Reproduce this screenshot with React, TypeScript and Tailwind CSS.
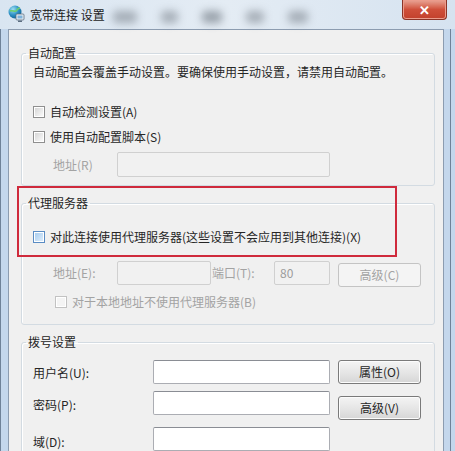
import type { ReactNode } from "react";

const cjk = "font-['Noto_Sans_CJK_SC','Noto_Sans',sans-serif]";

function CheckBox({ hot = false, disabled = false }: { hot?: boolean; disabled?: boolean }) {
  return (
    <span
      className={`flex h-[12px] w-[12px] shrink-0 items-center justify-center border ${
        hot ? "border-[#5a8cc4]" : disabled ? "border-[#c2c2c2]" : "border-[#8f8f8f]"
      } bg-white`}
    >
      <span
        className={`h-[8px] w-[8px] ${
          hot
            ? "bg-gradient-to-br from-[#a8cdef] to-[#dcecfb]"
            : disabled
            ? "bg-[#f4f4f4]"
            : "bg-gradient-to-br from-[#d6d6d6] to-[#fafafa]"
        }`}
      />
    </span>
  );
}

function CheckRow({
  label,
  hot,
  disabled,
  className = "",
}: {
  label: string;
  hot?: boolean;
  disabled?: boolean;
  className?: string;
}) {
  return (
    <label className={`flex h-[16px] items-center gap-[5px] ${className}`}>
      <CheckBox hot={hot} disabled={disabled} />
      <span className={disabled ? "text-[#a3a3a3]" : "text-[#262626]"}>{label}</span>
    </label>
  );
}

function TextBox({ w, h = 24, disabled = false, value = "" }: { w: number; h?: number; disabled?: boolean; value?: string }) {
  return (
    <div
      style={{ width: w, height: h }}
      className={`flex shrink-0 items-center rounded-[2px] border px-[5px] ${
        disabled
          ? "border-[#d0d0d0] bg-[#f1f1f1] text-[#9c9c9c]"
          : "border-[#abadb3] border-t-[#8a8d94] bg-white text-[#262626]"
      }`}
    >
      {value}
    </div>
  );
}

function Button({ children, disabled = false, className = "" }: { children: ReactNode; disabled?: boolean; className?: string }) {
  return (
    <button
      type="button"
      className={`flex h-[24px] w-[83px] shrink-0 items-center justify-center rounded-[3px] border ${
        disabled
          ? "border-[#c4c4c4] bg-[#f4f4f4] text-[#a3a3a3]"
          : "border-[#7a7a7a] bg-gradient-to-b from-[#f4f4f4] via-[#e6e6e6] to-[#d6d6d6] text-[#262626] shadow-[inset_0_0_0_1px_#fcfcfc]"
      } ${className}`}
    >
      {children}
    </button>
  );
}

function GroupBox({ title, children, className = "" }: { title: string; children: ReactNode; className?: string }) {
  return (
    <fieldset
      className={`rounded-[3px] border border-[#d3dbe2] pl-[11px] shadow-[inset_1px_1px_0_#ffffff] ${className}`}
    >
      <legend className="-ml-[7px] px-[2px] text-[12px] leading-[16px] text-[#262626]">{title}</legend>
      {children}
    </fieldset>
  );
}

function NetIcon() {
  return (
    <svg width="17" height="18" viewBox="0 0 17 18">
      <defs>
        <radialGradient id="globe" cx="0.35" cy="0.3" r="0.8">
          <stop offset="0" stopColor="#9fe0f2" />
          <stop offset="0.55" stopColor="#2b8fc4" />
          <stop offset="1" stopColor="#0f5b8c" />
        </radialGradient>
      </defs>
      <circle cx="7" cy="7" r="6.5" fill="url(#globe)" />
      <path d="M2 6c2-1 5 1 6 0s2-3 4-3" stroke="#6fcf6a" strokeWidth="1.6" fill="none" />
      <rect x="8" y="9" width="8" height="6" rx="1" fill="#e9eef3" stroke="#5b6d80" strokeWidth="0.8" />
      <rect x="9.5" y="10.5" width="5" height="3" fill="#7fb3dc" />
      <rect x="10" y="15.5" width="4" height="1.5" fill="#5b6d80" />
    </svg>
  );
}

export default function App() {
  return (
    <div
      className={`flex h-[451px] w-[455px] flex-col overflow-hidden bg-[#c4d7ec] text-[12px] leading-[16px] shadow-[inset_1px_0_0_#6f8298,inset_-4px_0_0_#c4d7ec,inset_-5px_0_0_#6f8298] ${cjk}`}
    >
      {/* title bar, with the glass showing the window behind it */}
      <div className="flex h-[29px] shrink-0 items-start bg-gradient-to-r from-[#d9e5f1] via-[#e4ecf4] to-[#d6e3f0] pl-[8px] pr-[8px]">
        <div className="mt-[5px]">
          <NetIcon />
        </div>
        <span className="ml-[5px] mt-[7px] text-[12px] text-[#1c1c1c]">宽带连接 设置</span>
        <div className="ml-[8px] mt-[11px] flex items-start gap-[24px] opacity-50">
          <span className="h-[12px] w-[24px] rounded-[4px] bg-[#6b737c] blur-[4px]" />
          <span className="h-[12px] w-[17px] rounded-[4px] bg-[#6b737c] blur-[4px]" />
          <span className="h-[12px] w-[20px] rounded-[4px] bg-[#4f5862] blur-[4px]" />
          <span className="h-[12px] w-[18px] rounded-[4px] bg-[#6b737c] blur-[4px]" />
          <span className="h-[12px] w-[20px] rounded-[4px] bg-[#6b737c] blur-[4px]" />
        </div>
        <div className="ml-auto flex h-[20px] w-[45px] items-center justify-center rounded-b-[4px] border border-t-0 border-[#8a3427] bg-gradient-to-b from-[#e8a596] via-[#cf4f3a] to-[#c2402c] text-[13px] font-bold text-white shadow-[inset_0_0_0_1px_#eb9c8c]">
          ✕
        </div>
      </div>

      {/* dialog body */}
      <div className="ml-[8px] mr-[11px] flex-1 border border-[#8c9cb0] bg-[#f0f0f0] pl-[12px] pr-[8px] pt-[15px]">
        <GroupBox title="自动配置" className="pb-[8px]">
          <p className="mt-[3px] text-[#262626]">自动配置会覆盖手动设置。要确保使用手动设置，请禁用自动配置。</p>
          <CheckRow className="mt-[24px]" label="自动检测设置(A)" />
          <CheckRow className="mt-[9px]" label="使用自动配置脚本(S)" />
          <div className="mt-[7px] flex items-center pl-[20px]">
            <span className="w-[64px] text-[#a3a3a3]">地址(R)</span>
            <TextBox w={213} h={25} disabled />
          </div>
        </GroupBox>

        <div className="relative mt-[9px]">
          <GroupBox title="代理服务器" className="pb-[14px]">
            <CheckRow className="mt-[18px]" label="对此连接使用代理服务器(这些设置不会应用到其他连接)(X)" hot />
            <div className="mt-[16px] flex h-[26px] items-start pl-[20px]">
              <span className="mt-[4px] w-[64px] text-[#a3a3a3]">地址(E):</span>
              <TextBox w={94} disabled />
              <span className="ml-[1px] mt-[4px] w-[62px] text-[#a3a3a3]">端口(T):</span>
              <TextBox w={56} disabled value="80" />
              <Button disabled className="ml-[8px] mt-[2px]">
                高级(C)
              </Button>
            </div>
            <CheckRow className="mt-[7px] pl-[22px]" label="对于本地地址不使用代理服务器(B)" disabled />
          </GroupBox>
          {/* red callout around the proxy switch */}
          <div className="pointer-events-none absolute left-[-4px] top-[-9px] h-[71px] w-[380px] border-2 border-[#cf2a3c]" />
        </div>

        <GroupBox title="拨号设置" className="mt-[9px] pb-[10px]">
          <div className="mt-[10px] flex items-start">
            <span className="mt-[5px] w-[120px] text-[#262626]">用户名(U):</span>
            <TextBox w={177} />
            <Button className="ml-[8px]">属性(O)</Button>
          </div>
          <div className="mt-[7px] flex items-start">
            <span className="mt-[6px] w-[120px] text-[#262626]">密码(P):</span>
            <TextBox w={177} />
            <Button className="ml-[8px] mt-[5px]">高级(V)</Button>
          </div>
          <div className="mt-[7px] flex items-start">
            <span className="mt-[7px] w-[120px] text-[#262626]">域(D):</span>
            <TextBox w={177} />
          </div>
        </GroupBox>
      </div>
    </div>
  );
}
